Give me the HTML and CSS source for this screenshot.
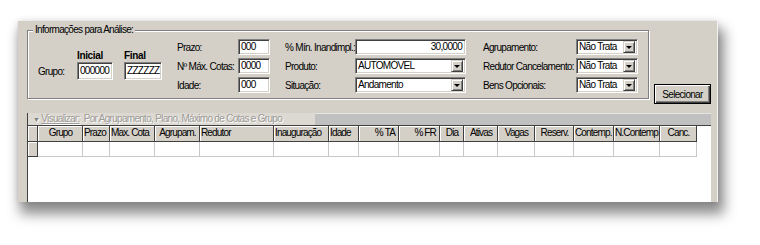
FILE: index.html
```html
<!DOCTYPE html>
<html>

<head>
    <title>Informações para Análise</title>
    <link rel="stylesheet" href="styles.css">
</head>

<body>
    <div class="window">
        <div class="top">
            <fieldset class="group">
                <legend>Informações para Análise:</legend>
                <div class="fields">
                    <div class="range">
                        <span></span>
                        <b>Inicial</b>
                        <b>Final</b>
                        <label>Grupo:</label>
                        <div class="edit">000000</div>
                        <div class="edit">ZZZZZZ</div>
                    </div>

                    <div class="col col-a">
                        <label>Prazo:</label>
                        <div class="edit">000</div>
                        <label>Nº Máx. Cotas:</label>
                        <div class="edit">0000</div>
                        <label>Idade:</label>
                        <div class="edit">000</div>
                    </div>

                    <div class="col col-b">
                        <label>% Mín. Inandimpl.:</label>
                        <div class="edit num">30,0000</div>
                        <label>Produto:</label>
                        <div class="combo"><span>AUTOMÓVEL</span><i class="drop"></i></div>
                        <label>Situação:</label>
                        <div class="combo"><span>Andamento</span><i class="drop"></i></div>
                    </div>

                    <div class="col col-c">
                        <label>Agrupamento:</label>
                        <div class="combo"><span>Não Trata</span><i class="drop"></i></div>
                        <label>Redutor Cancelamento:</label>
                        <div class="combo"><span>Não Trata</span><i class="drop"></i></div>
                        <label>Bens Opcionais:</label>
                        <div class="combo"><span>Não Trata</span><i class="drop"></i></div>
                    </div>
                </div>
            </fieldset>

            <button type="button" class="btn">Selecionar</button>
        </div>

        <div class="grid">
            <div class="grid-bar">
                <div class="bar-text"><span class="arrow">▼</span> <u>Visualizar:</u>&nbsp; Por Agrupamento, Plano, Máximo de Cotas e Grupo</div>
                <div class="bar-fill"></div>
            </div>

            <div class="row head">
                <div class="cell ind"></div>
                <div class="cell c">Grupo</div>
                <div class="cell">Prazo</div>
                <div class="cell">Max. Cota</div>
                <div class="cell c">Agrupam.</div>
                <div class="cell">Redutor</div>
                <div class="cell">Inauguração</div>
                <div class="cell">Idade</div>
                <div class="cell r">% TA</div>
                <div class="cell r">% FR</div>
                <div class="cell c">Dia</div>
                <div class="cell c">Ativas</div>
                <div class="cell c">Vagas</div>
                <div class="cell c">Reserv.</div>
                <div class="cell">Contemp.</div>
                <div class="cell">N.Contemp.</div>
                <div class="cell c">Canc.</div>
            </div>

            <div class="row data">
                <div class="cell ind"></div>
                <div class="cell"></div>
                <div class="cell"></div>
                <div class="cell"></div>
                <div class="cell"></div>
                <div class="cell"></div>
                <div class="cell"></div>
                <div class="cell"></div>
                <div class="cell"></div>
                <div class="cell"></div>
                <div class="cell"></div>
                <div class="cell"></div>
                <div class="cell"></div>
                <div class="cell"></div>
                <div class="cell"></div>
                <div class="cell"></div>
                <div class="cell"></div>
            </div>
        </div>
    </div>
</body>

</html>
```

FILE: styles.css
```css
body {
    box-sizing: border-box;
    min-height: 245px;
    margin: 0;
    padding: 21px 0 0 18px;
    background-color: #fff;
    font-family: "Liberation Sans", Arial, sans-serif;
    font-size: 10px;
    letter-spacing: -0.7px;
    color: #000;
}

.window {
    box-sizing: border-box;
    width: 700px;
    height: 181px;
    padding: 0 6px 0 9px;
    background-color: #d4d0c8;
    border-right: 1px solid #f4f2ee;
    box-shadow: 4px 10px 12px 2px rgba(0, 0, 0, 0.45), 0 0 6px rgba(0, 0, 0, 0.12);
}

.top {
    box-sizing: border-box;
    height: 92px;
    padding-top: 3px;
    display: flex;
    align-items: flex-start;
}

/* group box */
.group {
    box-sizing: border-box;
    width: 622px;
    margin: 0;
    padding: 3px 0 5px 10px;
    border: 1px solid #808080;
    box-shadow: inset 1px 1px 0 #fff, 1px 1px 0 #fff;
}

.group legend {
    margin-left: -5px;
    padding: 0 2px;
    line-height: 12px;
    background-color: #d4d0c8;
}

.fields {
    display: flex;
    align-items: flex-start;
    gap: 15px;
}

.range {
    margin-top: 10px;
    display: grid;
    grid-template-columns: 28px 36px 38px;
    grid-template-rows: 12px 18px;
    column-gap: 11px;
    row-gap: 1px;
    align-items: center;
}

.range b {
    letter-spacing: -0.35px;
}

.col {
    display: grid;
    grid-auto-rows: 16px;
    row-gap: 3px;
    align-items: center;
}

.col-a {
    grid-template-columns: 61px 32px;
}

.col-b {
    grid-template-columns: 70px 111px;
}

.col-c {
    margin-left: 2px;
    grid-template-columns: 93px 62px;
}

label {
    white-space: nowrap;
}

/* sunken edit boxes */
.edit,
.combo {
    box-sizing: border-box;
    height: 16px;
    background-color: #fff;
    border: 1px solid;
    border-color: #808080 #fff #fff #808080;
    box-shadow: inset 1px 1px 0 #404040, inset -1px -1px 0 #d4d0c8;
    padding: 0 3px 0 2px;
    line-height: 14px;
    white-space: nowrap;
    overflow: hidden;
}

.range .edit {
    height: 18px;
    line-height: 16px;
}

.num {
    text-align: right;
}

.combo {
    display: flex;
    padding: 1px 2px 1px 2px;
    line-height: 12px;
}

.combo span {
    flex: 1;
    overflow: hidden;
}

.drop {
    box-sizing: border-box;
    width: 12px;
    height: 12px;
    background-color: #d4d0c8;
    border: 1px solid;
    border-color: #d4d0c8 #404040 #404040 #d4d0c8;
    box-shadow: inset 1px 1px 0 #fff, inset -1px -1px 0 #808080;
    display: flex;
    align-items: center;
    justify-content: center;
}

.drop::after {
    content: "";
    border-left: 3px solid transparent;
    border-right: 3px solid transparent;
    border-top: 3px solid #000;
}

.btn {
    box-sizing: border-box;
    width: 57px;
    height: 20px;
    margin: 60px 0 0 5px;
    padding: 0;
    font: inherit;
    letter-spacing: inherit;
    background-color: #d4d0c8;
    border: 1px solid #000;
    box-shadow: inset 1px 1px 0 #fff, inset -1px -1px 0 #404040, inset -2px -2px 0 #808080;
    border-radius: 0;
}

/* data grid */
.grid {
    height: 89px;
    background-color: #fff;
    border-left: 1px solid #404040;
    overflow: hidden;
}

.grid-bar {
    display: flex;
    height: 12px;
}

.bar-text {
    width: 282px;
    padding-left: 5px;
    background-color: #dcd9d2;
    color: #9c9a96;
    text-shadow: 1px 1px 0 #fff;
    line-height: 12px;
    white-space: nowrap;
    overflow: hidden;
}

.bar-text .arrow {
    font-size: 7px;
    color: #808080;
}

.bar-fill {
    flex: 1;
    background-color: #c0c0c0;
    border-top: 1px solid #e4e4e4;
}

.row {
    display: grid;
    grid-template-columns: 10px 45px 27px 45px 45px 74px 55px 30px 40px 41px 24px 34px 37px 39px 40px 46px 37px;
}

.cell {
    box-sizing: border-box;
    padding: 0 2px;
    white-space: nowrap;
    overflow: hidden;
}

.c {
    text-align: center;
}

.r {
    text-align: right;
}

.head {
    border-top: 1px solid #404040;
}

.head .cell {
    height: 16px;
    padding: 0 0 0 1px;
    letter-spacing: -0.85px;
    line-height: 14px;
    background-color: #d4d0c8;
    border-right: 1px solid #404040;
    border-bottom: 1px solid #404040;
    box-shadow: inset 1px 1px 0 #fff;
}

.head .r {
    padding-right: 3px;
}

.data .cell {
    height: 15px;
    border-right: 1px solid #c8c8c8;
    border-bottom: 1px solid #c8c8c8;
}

.data .ind {
    background-color: #d4d0c8;
    border-right: 1px solid #404040;
    border-bottom: 1px solid #404040;
    box-shadow: inset 1px 1px 0 #fff;
}
```
